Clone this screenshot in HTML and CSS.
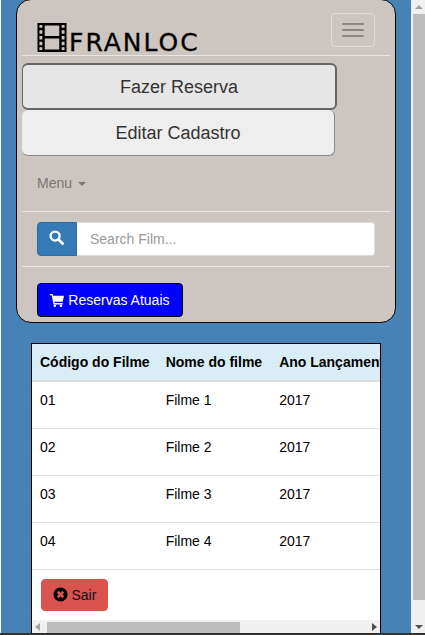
FILE: index.html
```html
<!DOCTYPE html>
<html lang="pt">
<head>
  <meta charset="UTF-8">
  <title>Franloc</title>
  <link rel="stylesheet" href="styles.css">
</head>
<body>
  <div class="window">
    <div class="page">
      <nav class="navbar">
        <div class="navbar-header">
          <a class="brand" href="#">
            <svg class="film-icon" viewBox="0 0 30 30" width="30" height="29" aria-hidden="true">
              <path fill-rule="evenodd" d="M0 0H30V30H0ZM2 2V5H5V2ZM2 7.5V11H5V7.5ZM2 13.500V17H5V13.500ZM2 19.500V23H5V19.500ZM2 25V28H5V25ZM25 2V5H28V2ZM25 7.500V11H28V7.500ZM25 13.500V17H28V13.500ZM25 19.500V23H28V19.500ZM25 25V28H28V25ZM7.500 2.500V13.500H22.500V2.500ZM7.500 16V27.500H22.500V16Z"/>
            </svg>
            <span class="brand-name">FRANLOC</span>
          </a>
          <button class="navbar-toggle" type="button" aria-label="Menu">
            <span class="icon-bar"></span>
            <span class="icon-bar"></span>
            <span class="icon-bar"></span>
          </button>
        </div>

        <div class="navbar-links">
          <button class="big-btn btn-reserva" type="button">Fazer Reserva</button>
          <button class="big-btn btn-cadastro" type="button">Editar Cadastro</button>
          <a class="menu-link" href="#">Menu <span class="caret"></span></a>
        </div>

        <form class="navbar-form">
          <div class="input-group">
            <button class="btn-search" type="button" aria-label="Buscar">
              <svg viewBox="0 0 16 16" width="15" height="15" aria-hidden="true">
                <circle cx="6.500" cy="6.500" r="4.800" fill="none" stroke="#fff" stroke-width="2.500"/>
                <path d="M10 10L14.500 14.500" stroke="#fff" stroke-width="3" stroke-linecap="round"/>
              </svg>
            </button>
            <input class="search-input" type="text" placeholder="Search Film...">
          </div>
        </form>

        <div class="navbar-bottom">
          <button class="btn-atuais" type="button">
            <svg viewBox="0 0 16 16" width="14" height="14" aria-hidden="true">
              <path fill="#fff" d="M0 1H3L3.500 3H16L14.500 10H5L5.300 11.500H14.500V13H4L2 2.500H0Z"/>
              <circle cx="5.500" cy="14.500" r="1.500" fill="#fff"/>
              <circle cx="12.500" cy="14.500" r="1.500" fill="#fff"/>
            </svg>
            Reservas Atuais
          </button>
        </div>
      </nav>

      <div class="table-box">
        <div class="table-clip">
          <table class="film-table">
            <thead>
              <tr>
                <th>Código do Filme</th>
                <th>Nome do filme</th>
                <th>Ano Lançamento</th>
                <th class="filler"></th>
              </tr>
            </thead>
            <tbody>
              <tr><td>01</td><td>Filme 1</td><td>2017</td><td class="filler"></td></tr>
              <tr><td>02</td><td>Filme 2</td><td>2017</td><td class="filler"></td></tr>
              <tr><td>03</td><td>Filme 3</td><td>2017</td><td class="filler"></td></tr>
              <tr><td>04</td><td>Filme 4</td><td>2017</td><td class="filler"></td></tr>
            </tbody>
          </table>
          <div class="table-footer">
            <button class="btn-sair" type="button">
              <svg viewBox="0 0 16 16" width="15" height="15" aria-hidden="true">
                <path fill-rule="evenodd" d="M8 .5a7.500 7.500 0 1 0 0 15A7.500 7.500 0 0 0 8 .5ZM6 4L8 6 10 4 12 6 10 8 12 10 10 12 8 10 6 12 4 10 6 8 4 6Z"/>
              </svg>
              Sair
            </button>
          </div>
        </div>
        <div class="h-scrollbar">
          <span class="arrow arrow-left"></span>
          <div class="h-track"><div class="h-thumb"></div></div>
          <span class="arrow arrow-right"></span>
        </div>
      </div>
    </div>

    <div class="v-scrollbar">
      <span class="arrow arrow-up"></span>
      <div class="v-thumb"></div>
      <span class="arrow arrow-down"></span>
    </div>
  </div>
  <div class="bottom-edge"></div>
</body>
</html>
```

FILE: styles.css
```css
* {
  box-sizing: border-box;
}

html, body {
  height: 100%;
}

body {
  display: flex;
  flex-direction: column;
  margin: 0;
  overflow: hidden;
  background: #fff;
  font-family: "Liberation Sans", Arial, sans-serif;
  font-size: 14px;
  line-height: 20px;
  color: #333;
}

button {
  font-family: inherit;
  cursor: pointer;
}

.window {
  display: flex;
  flex: 1;
  min-height: 0;
  padding-left: 1px;
}

.page {
  flex: 1;
  min-width: 0;
  overflow: hidden;
  background: #4682b4;
}

.bottom-edge {
  height: 2px;
  background: #333;
}

/* navbar */
.navbar {
  margin: -1px 15px 0;
  padding: 0 5px;
  height: 324px;
  background: #cdc5bf;
  border: 1px solid #000;
  border-radius: 15px;
}

.navbar-header {
  display: flex;
  justify-content: space-between;
  align-items: flex-start;
  height: 56px;
  padding: 13px 15px 0;
  border-bottom: 1px solid #e7e7e7;
}

.brand {
  display: flex;
  align-items: flex-start;
  color: #000;
  text-decoration: none;
}

.film-icon {
  margin-top: 10px;
}

.brand-name {
  margin: 16px 0 0 2px;
  font-family: "DejaVu Sans", sans-serif;
  font-size: 25px;
  line-height: 28px;
  letter-spacing: 2px;
  -webkit-text-stroke: 0.3px #000;
}

.navbar-toggle {
  width: 44px;
  height: 34px;
  padding: 9px 10px;
  background: transparent;
  border: 1px solid #ddd;
  border-radius: 4px;
}

.icon-bar {
  display: block;
  height: 2px;
  background: #888;
  border-radius: 1px;
}

.icon-bar + .icon-bar {
  margin-top: 4px;
}

.navbar-links {
  height: 156px;
  padding-top: 7px;
  border-bottom: 1px solid #e7e7e7;
}

.big-btn {
  display: block;
  padding: 1px 0 0;
  font-size: 18px;
  color: #333;
  text-align: center;
  border-radius: 6px;
}

.btn-reserva {
  width: 315px;
  height: 47px;
  background: #e6e6e6;
  border: 2px solid #666;
  border-left-width: 1px;
}

.btn-cadastro {
  width: 313px;
  height: 46px;
  background: #eee;
  border: 1px solid #888;
  border-left: none;
  border-top: none;
}

.menu-link {
  display: block;
  margin-top: 17px;
  padding-left: 15px;
  color: #777;
  text-decoration: none;
}

.caret {
  display: inline-block;
  margin-left: 2px;
  vertical-align: middle;
  border-top: 4px solid #777;
  border-left: 4px solid transparent;
  border-right: 4px solid transparent;
}

.navbar-form {
  height: 55px;
  padding: 10px 15px;
  border-bottom: 1px solid #e7e7e7;
}

.input-group {
  display: flex;
  height: 34px;
}

.btn-search {
  width: 40px;
  padding: 0 2px 0 0;
  background: #337ab7;
  border: 1px solid #2e6da4;
  border-radius: 4px 0 0 4px;
}

.search-input {
  flex: 1;
  min-width: 0;
  padding: 6px 13px;
  font-family: inherit;
  font-size: 14px;
  color: #555;
  background: #fff;
  border: 1px solid #ddd;
  border-left: none;
  border-radius: 0 4px 4px 0;
}

.search-input::placeholder {
  color: #999;
}

.navbar-bottom {
  padding: 16px 15px 0;
}

.btn-atuais {
  width: 146px;
  height: 34px;
  padding: 0;
  font-size: 14px;
  color: #fff;
  background: #00f;
  border: 1px solid #000;
  border-radius: 4px;
}

.btn-atuais svg,
.btn-sair svg {
  vertical-align: -2px;
}

/* table */
.table-box {
  margin: 20px 30px 0;
  height: 400px;
  background: #fff;
  border: 1px solid #000;
  border-bottom: none;
}

.table-clip {
  height: 276px;
  overflow: hidden;
}

.film-table {
  width: 620px;
  border-collapse: collapse;
  white-space: nowrap;
}

.film-table th,
.film-table td {
  height: 47px;
  padding: 8px;
  text-align: left;
  color: #000;
  vertical-align: top;
  border-top: 1px solid #ddd;
}

.film-table th {
  height: 37px;
  vertical-align: middle;
  background: #d9edf7;
  border-top: none;
  border-bottom: 2px solid #ddd;
}

.film-table tr > :nth-child(2) {
  padding-right: 9px;
}

.film-table .filler {
  width: 100%;
}

.table-footer {
  width: 348px;
  height: 50px;
  padding: 9px;
  border-top: 1px solid #ddd;
}

.btn-sair {
  width: 67px;
  height: 32px;
  padding: 0;
  font-size: 14px;
  color: #111;
  background: #d9534f;
  border: 1px solid #d9534f;
  border-radius: 4px;
}

/* scrollbars, painted because the page itself does not scroll */
.h-scrollbar {
  display: flex;
  align-items: center;
  height: 13px;
  background: #f0f0f0;
}

.h-track {
  flex: 1;
  height: 100%;
  padding-top: 2px;
}

.h-thumb {
  width: 193px;
  height: 100%;
  background: #bdbdbd;
}

.v-scrollbar {
  display: flex;
  flex-direction: column;
  align-items: center;
  width: 14px;
  padding-left: 2px;
  background: #f0f0f0;
}

.v-thumb {
  width: 100%;
  height: 586px;
  margin-top: 5px;
  background: #bdbdbd;
}

.arrow {
  display: block;
  flex: none;
  width: 0;
  height: 0;
  border-style: solid;
  border-color: transparent;
}

.arrow-left {
  margin: 0 7px 0 3px;
  border-width: 4px 5px 4px 0;
  border-right-color: #a3a3a3;
}

.arrow-right {
  margin: 0 3px 0 6px;
  border-width: 4px 0 4px 5px;
  border-left-color: #505050;
}

.arrow-up {
  margin-top: 5px;
  border-width: 0 4px 4px;
  border-bottom-color: #a3a3a3;
}

.arrow-down {
  margin-top: 25px;
  border-width: 4px 4px 0;
  border-top-color: #505050;
}
```
